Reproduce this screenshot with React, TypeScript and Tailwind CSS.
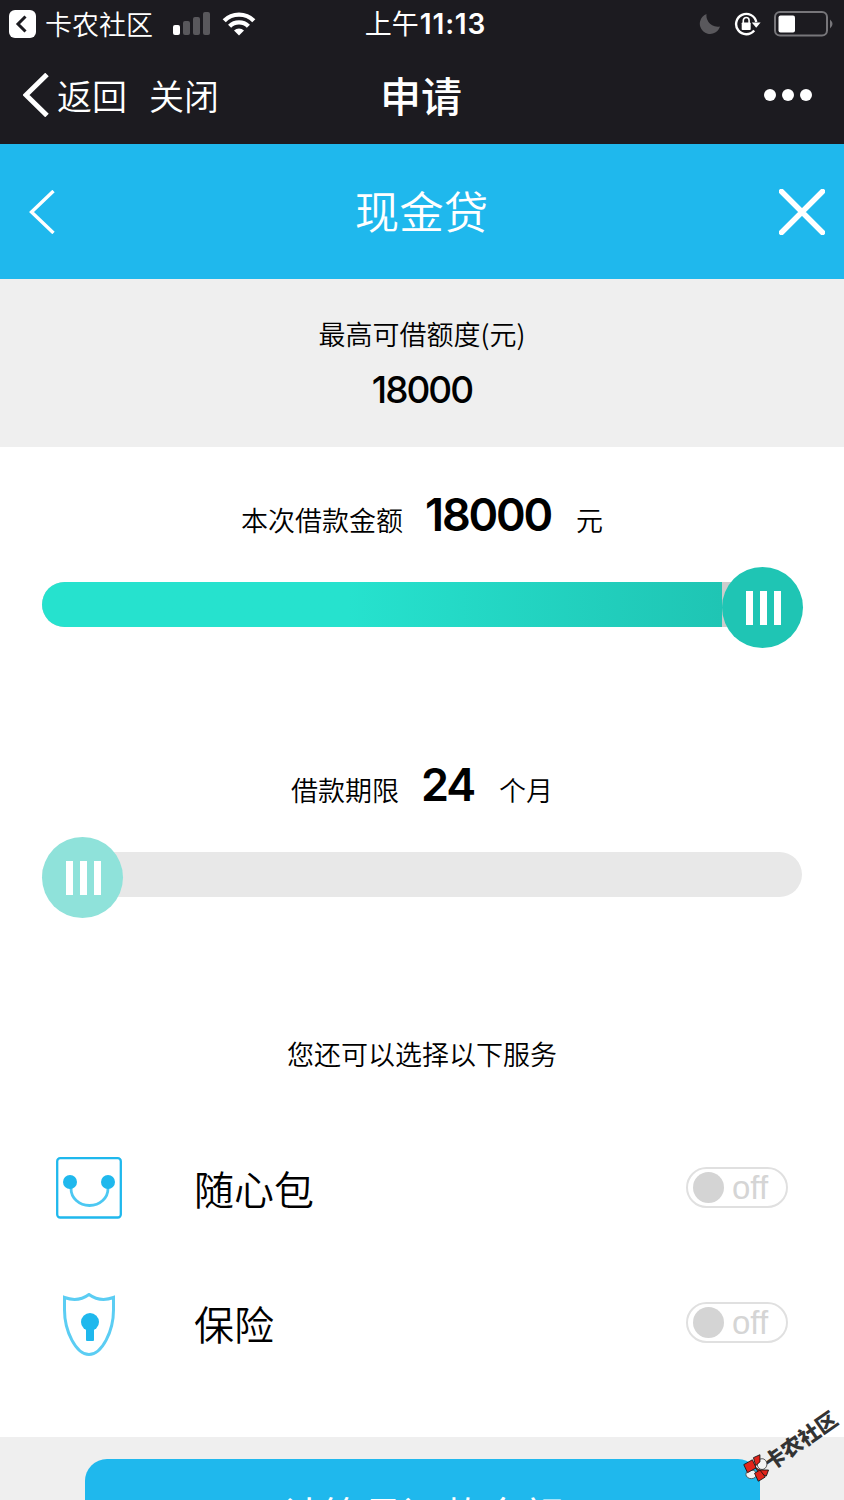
import React from 'react';
import clsx from 'clsx';

const services = [
  { id: 'pack', name: '随心包' },
  { id: 'insurance', name: '保险' },
];

const StatusBar: React.FC = () => (
  <div className="flex h-[47px] items-center justify-between pr-3 pl-[9px] text-white">
    <div className="flex w-[300px] items-center">
      <svg width="27" height="28" viewBox="0 0 27 28">
        <rect width="27" height="28" rx="6" fill="#fff" />
        <path d="M16.5 6.5 9 14l7.5 7.5" fill="none" stroke="#1c1b20" strokeWidth="3" />
      </svg>
      <span className="ml-[9px] text-[27px] leading-[44px] font-[350]">卡农社区</span>
      <svg className="ml-5" width="37" height="24" viewBox="0 0 37 24">
        <rect x="0" y="13" width="7" height="10" rx="2" fill="#fff" />
        <rect x="10" y="9" width="7" height="14" rx="2" fill="#59585c" />
        <rect x="20" y="5" width="7" height="18" rx="2" fill="#59585c" />
        <rect x="30" y="0" width="7" height="23" rx="2" fill="#59585c" />
      </svg>
      <svg className="ml-3" width="34" height="24" viewBox="0 0 34 24">
        <g fill="none" stroke="#fff" strokeWidth="4.4">
          <path d="M2.2 8.7a21 21 0 0 1 29.6 0" />
          <path d="M7.6 14.2a13.4 13.4 0 0 1 18.8 0" />
        </g>
        <path d="M17 23.500l-5-5a7.1 7.1 0 0 1 10 0z" fill="#fff" />
      </svg>
    </div>
    <div className="ml-[10px] flex items-baseline leading-[44px]">
      <span className="text-[27px] font-normal">上午</span>
      <span className="ml-px font-[Inter] text-[28px] tracking-[0.8px] font-semibold">11:13</span>
    </div>
    <div className="flex w-[300px] items-center justify-end">
      <svg width="22" height="22" viewBox="0 0 22 22">
        <path d="M7.5 1A10.3 10.3 0 1 0 21 13.5 11.3 11.3 0 0 1 7.5 1z" fill="#59585c" />
      </svg>
      <svg className="ml-[13px]" width="28" height="24" viewBox="0 0 28 24">
        <path d="M20.2 18.6A10.2 10.2 0 1 1 22.3 10" fill="none" stroke="#fff" strokeWidth="2.4" />
        <path d="M17.8 10.5h8.8l-4.4 5.2z" fill="#fff" />
        <rect x="7.7" y="10.5" width="9" height="7.5" rx="0.8" fill="#fff" />
        <path d="M9.3 11V8.4a2.9 2.9 0 0 1 5.8 0V11" fill="none" stroke="#fff" strokeWidth="1.6" />
      </svg>
      <svg className="-mr-0.5 ml-3" width="60" height="26" viewBox="0 0 60 26">
        <rect x="1" y="1" width="52" height="23.5" rx="5" fill="none" stroke="#77767a" strokeWidth="2" />
        <rect x="4.5" y="4.5" width="16.5" height="17" rx="2" fill="#fff" />
        <path d="M56 8.500q5 4.500 0 9z" fill="#77767a" />
      </svg>
    </div>
  </div>
);

const NavBar: React.FC = () => (
  <div className="flex h-24 items-center justify-between pr-8 pl-[23px] text-white">
    <div className="flex w-[300px] items-center">
      <svg width="26" height="44" viewBox="0 0 26 44">
        <path d="M24 1.500 3 22l21 20.500" fill="none" stroke="#fff" strokeWidth="5" />
      </svg>
      <span className="ml-2 text-[35px] font-[350]">返回</span>
      <span className="ml-[22px] text-[35px] font-[350]">关闭</span>
    </div>
    <h1 className="ml-[7px] text-[41px] font-medium">申请</h1>
    <div className="flex w-[300px] justify-end gap-[6px]">
      <i className="size-3 rounded-full bg-white" />
      <i className="size-3 rounded-full bg-white" />
      <i className="size-3 rounded-full bg-white" />
    </div>
  </div>
);

const PageHeader: React.FC = () => (
  <header className="flex h-[135px] items-center justify-between bg-[#1fb8ed] pr-[19px] pl-[29px] text-white">
    <svg width="36" height="44" viewBox="0 0 36 44">
      <path d="M24.500 1 2.500 22l22 21" fill="none" stroke="#fff" strokeWidth="3.4" />
    </svg>
    <h2 className="mr-px pb-[3px] text-[44.5px] font-[350]">现金贷</h2>
    <svg width="46" height="46" viewBox="0 0 46 46">
      <path d="M2.500 2.500l41 41M43.500 2.500l-41 41" stroke="#fff" strokeWidth="5.4" strokeLinecap="round" />
    </svg>
  </header>
);

type AmountProps = { label: string; value: string; unit: string };

const Amount: React.FC<AmountProps> = ({ label, value, unit }) => (
  <div className="flex h-16 items-baseline justify-center leading-[60px]">
    <span className="text-[27px] font-[350]">{label}</span>
    <span className="mr-[25px] ml-[22px] font-[Inter] text-[45px] tracking-[-2.2px] font-semibold">{value}</span>
    <span className="text-[27px] font-[350]">{unit}</span>
  </div>
);

const Slider: React.FC<{ full?: boolean }> = ({ full }) => (
  <div className="relative mx-[42px] mt-[18px] h-[81px] pt-[15px]">
    <div className={clsx('h-[45px] w-[760px] overflow-hidden rounded-full', full ? 'bg-[#ccc]' : 'bg-[#e8e8e8]')}>
      {full && <div className="h-full w-[680px] bg-linear-to-r from-[#26e2ce] from-45% to-[#1fc5b4]" />}
    </div>
    <div
      className={clsx(
        'absolute top-0 flex size-[81px] items-center justify-center gap-[7px] rounded-full pt-px pl-[2px]',
        full ? 'left-[680px] bg-[#1fc5b4]' : 'left-0 bg-[#8fe2da]'
      )}
    >
      <i className="h-[34px] w-[7px] bg-white" />
      <i className="h-[34px] w-[7px] bg-white" />
      <i className="h-[34px] w-[7px] bg-white" />
    </div>
  </div>
);

const PackIcon = () => (
  <svg className="mt-px" width="66" height="62" viewBox="0 0 66 62">
    <rect x="1.200" y="1.200" width="63.600" height="59.300" rx="3" fill="none" stroke="#1fb8ed" strokeWidth="2.300" />
    <path d="M15 28v3.500c0 9.500 8 17 18.500 17S52 41 52 31.500V28" fill="none" stroke="#4cc8f2" strokeWidth="2.800" />
    <circle cx="14" cy="25" r="7" fill="#1fb8ed" />
    <circle cx="52" cy="25" r="7" fill="#1fb8ed" />
  </svg>
);

const ShieldIcon = () => (
  <svg className="mt-[3px]" width="52" height="63" viewBox="0 0 52 63">
    <path
      d="M1.500 4.500Q15 9.500 26 1.500 37 9.500 50.500 4.500V17C50.500 38 39 61.500 26 61.500S1.500 38 1.500 17z"
      fill="none"
      stroke="#5bcdf3"
      strokeWidth="3"
    />
    <circle cx="27" cy="29" r="9" fill="#1fb8ed" />
    <rect x="23" y="34" width="8" height="14" rx="1" fill="#1fb8ed" />
  </svg>
);

const OffSwitch = () => (
  <button className="flex h-[41px] w-[102px] items-center rounded-full border-2 border-[#e0e0e0] pl-[5px] text-[#d5d5d5]">
    <i className="size-[31px] rounded-full bg-[#d4d4d4]" />
    <span className="ml-2 font-['Liberation_Sans'] text-[33px] leading-[36px]">off</span>
  </button>
);

const Watermark = () => (
  <div className="absolute top-[1427px] left-[734px] flex w-[115px] -rotate-[35deg] items-center">
    <svg className="shrink-0 rotate-[35deg]" width="28" height="28" viewBox="0 0 26 26">
      <g fill="#f4f4f4" stroke="#444" strokeWidth="0.8">
        <ellipse cx="18.500" cy="9.500" rx="4.500" ry="5" />
        <ellipse cx="8.500" cy="19" rx="5" ry="4" />
      </g>
      <g fill="#e1251b" stroke="#111" strokeWidth="0.8">
        <path d="M1.500 10l8-4.500L13 13l-8 4.500z" />
        <path d="M10.500 3.500l6-2.700v6.700L12.500 11z" />
        <path d="M12.500 13l4 2h8L22.500 20.500 16 18.500z" />
        <path d="M11.500 18l5-3 5 6.500-6.500 4z" />
      </g>
    </svg>
    <span className="-ml-1 pt-[5px] text-[21px] leading-[26px] font-black whitespace-nowrap text-[#333]">卡农社区</span>
  </div>
);

const App: React.FC = () => {
  return (
    <div className="relative h-[1500px] w-[844px] overflow-hidden bg-white font-['Noto_Sans_CJK_SC',sans-serif] text-black">
      <div className="h-36 bg-[#1c1b20]">
        <StatusBar />
        <NavBar />
      </div>
      <PageHeader />

      {/* Credit limit */}
      <section className="flex h-[168px] flex-col items-center bg-[#efefef] pt-[34px]">
        <p className="text-[27px] leading-[42px] font-[350]">最高可借额度(元)</p>
        <p className="mt-[10px] font-[Inter] text-[37px] leading-[50px] tracking-[-2px] font-medium">18000</p>
      </section>

      <section className="h-[990px] pt-[38px]">
        <Amount label="本次借款金额" value="18000" unit="元" />
        <Slider full />
        <div className="h-[107px]" />
        <Amount label="借款期限" value="24" unit="个月" />
        <Slider />

        <p className="mt-[116px] text-center text-[27px] leading-[40px] font-[350]">您还可以选择以下服务</p>
        <ul className="mt-[46px]">
          {services.map((item) => (
            <li key={item.id} className="flex h-[135px] items-center pr-14 pl-[56px]">
              <div className="flex w-[66px] justify-center">
                {item.id === 'pack' ? <PackIcon /> : <ShieldIcon />}
              </div>
              <span className="ml-[72px] flex-1 text-[40px] font-[350]">{item.name}</span>
              <OffSwitch />
            </li>
          ))}
        </ul>
      </section>

      {/* Submit */}
      <footer className="h-[63px] bg-[#efefef] pt-[22px]">
        <button className="ml-[85px] block h-[100px] w-[675px] rounded-[22px] bg-[#1fb8ed] pt-[9px] text-[40px] text-white">
          计算月还款金额
        </button>
      </footer>
      <Watermark />
    </div>
  );
};

export default App;
